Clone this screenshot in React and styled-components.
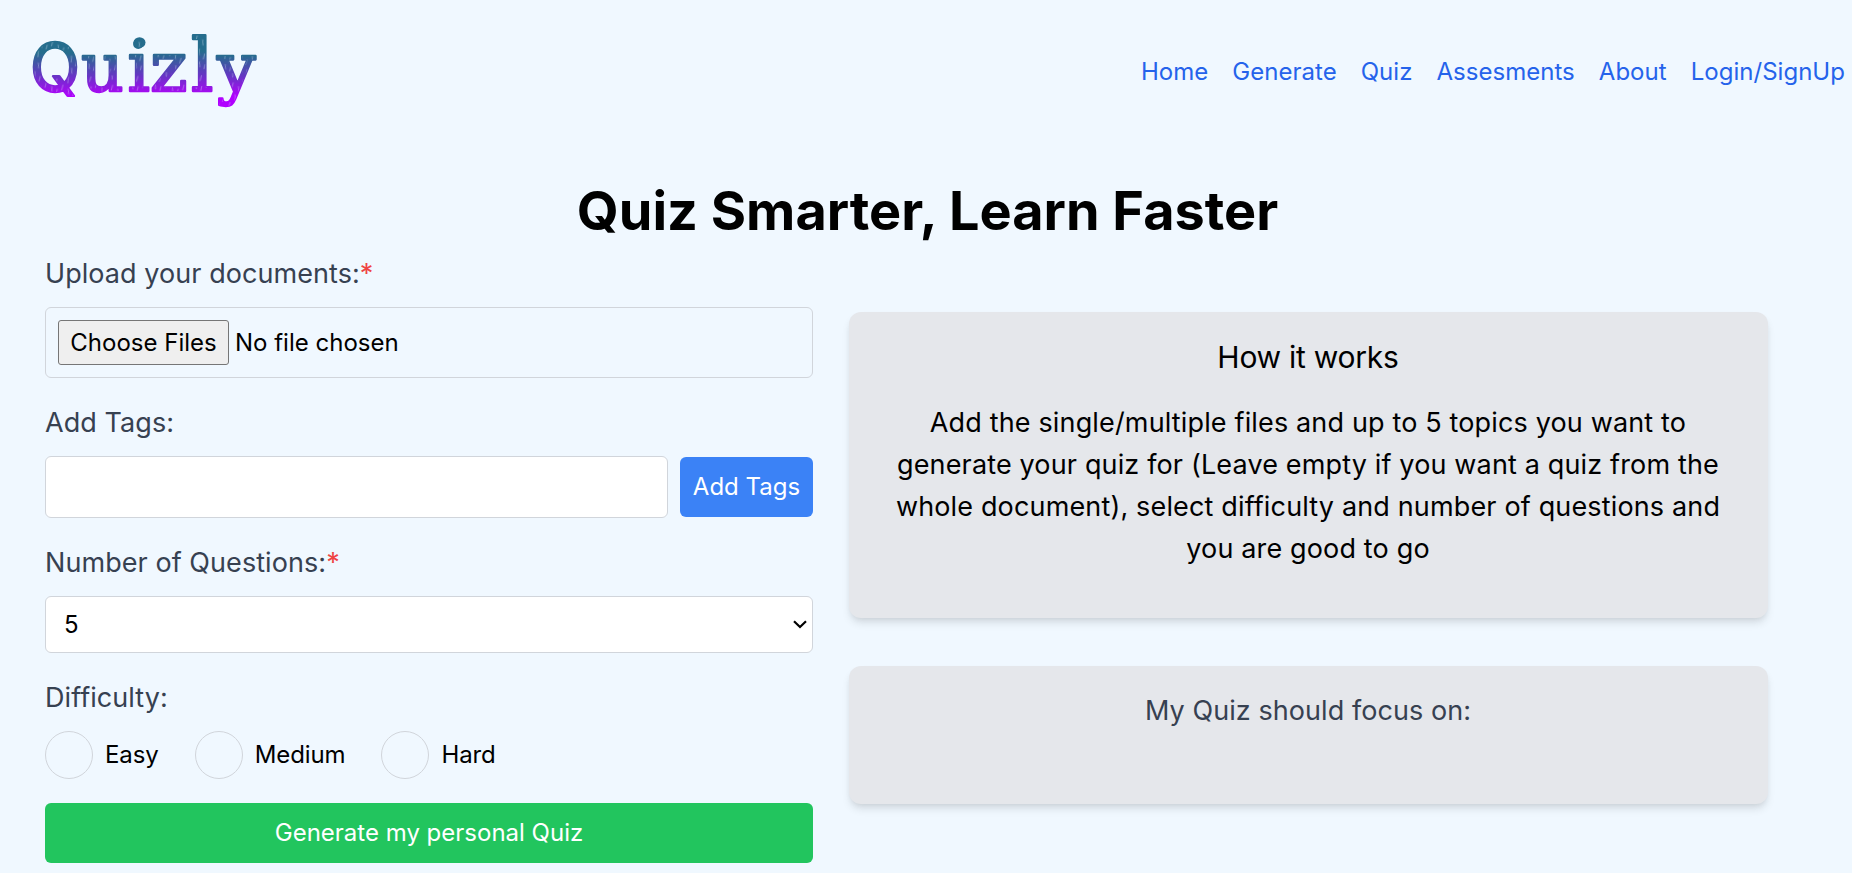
import React from "react";
import styled, { createGlobalStyle } from "styled-components";

const GlobalStyle = createGlobalStyle`
  *, *::before, *::after { box-sizing: border-box; }
  html, body { margin: 0; padding: 0; }
  body {
    height: 873px;
    overflow: hidden;
    background: #f0f8ff;
    color: #000;
    font-family: Inter, "Liberation Sans", sans-serif;
    font-size: 24px;
    line-height: 36px;
  }
  input, select, button { font: inherit; color: inherit; margin: 0; }
`;

const Header = styled.header`
  display: flex;
  align-items: center;
  justify-content: space-between;
  height: 144px;
  padding: 0 7px 0 24px;
`;

const LogoArt = styled.svg`
  display: block;
  width: 244px;
  height: 100px;
`;

const Nav = styled.nav`
  display: flex;
  gap: 24px;
  letter-spacing: 0.03px;
`;

const NavLink = styled.a`
  color: #2563eb;
  text-decoration: none;
  white-space: nowrap;
`;

const Title = styled.h1`
  margin: 37px 0 0;
  padding-left: 3px;
  height: 60px;
  font-size: 54px;
  line-height: 60px;
  font-weight: 700;
  text-align: center;
`;

const Main = styled.main`
  display: flex;
  gap: 36px;
  padding: 12px 84px 0 45px;
`;

const Form = styled.form`
  display: flex;
  flex-direction: column;
  gap: 24px;
  width: 768px;
`;

const Field = styled.div`
  display: flex;
  flex-direction: column;
  gap: 12px;
`;

const Label = styled.label`
  font-size: 27px;
  line-height: 42px;
  letter-spacing: 0.06px;
  color: #374151;
`;

const Required = styled.span`
  color: #ef4444;
`;

const FileInput = styled.input`
  height: 71px;
  padding: 12px;
  border: 1px solid #d1d5db;
  border-radius: 6px;

  &::file-selector-button {
    width: 171px;
    height: 45px;
    margin: 0 6px 0 0;
    padding: 0;
    border: 1px solid #767676;
    border-radius: 3px;
    background: #efefef;
    color: #000;
    font: inherit;
  }
`;

const TagRow = styled.div`
  display: flex;
  align-items: center;
  gap: 12px;
`;

const TextInput = styled.input`
  flex: 1;
  min-width: 0;
  height: 62px;
  padding: 12px;
  background: #fff;
  border: 1px solid #d1d5db;
  border-radius: 6px;
`;

const Button = styled.button`
  width: ${(p) => p.$width};
  height: 60px;
  padding: 0;
  border: 0;
  border-radius: 6px;
  background: ${(p) => p.$color};
  color: #fff;
  white-space: nowrap;
`;

const SelectBox = styled.div`
  display: grid;
  align-items: center;

  & > * { grid-area: 1 / 1; }
`;

const Select = styled.select`
  appearance: none;
  width: 100%;
  height: 57px;
  padding: 0 18px;
  background: #fff;
  border: 1px solid #d1d5db;
  border-radius: 6px;
`;

const Chevron = styled.svg`
  justify-self: end;
  width: 14px;
  height: 9px;
  margin-right: 6px;
  pointer-events: none;
`;

const Options = styled.div`
  display: flex;
  gap: 36px;
`;

const Option = styled.label`
  display: flex;
  align-items: center;
  gap: 12px;
  letter-spacing: -0.1px;
`;

const Radio = styled.input`
  appearance: none;
  width: 48px;
  height: 48px;
  border: 1px solid #d1d5db;
  border-radius: 50%;
`;

const Aside = styled.aside`
  display: flex;
  flex-direction: column;
  gap: 48px;
  width: 919px;
  padding-top: 59px;
`;

const Card = styled.section`
  height: ${(p) => p.$height};
  padding: 24px 37px 24px 36px;
  border-radius: 12px;
  background: #e5e7eb;
  box-shadow: 0 6px 9px -1.5px rgba(0, 0, 0, 0.1), 0 3px 6px -3px rgba(0, 0, 0, 0.1);
  text-align: center;
`;

const CardTitle = styled.h2`
  margin: 0 0 24px;
  font-size: 30px;
  line-height: 42px;
  font-weight: 400;
  letter-spacing: -0.25px;
`;

const CardText = styled.p`
  margin: 0;
  font-size: 27px;
  line-height: 42px;
  letter-spacing: ${(p) => (p.$muted ? "0.06px" : "0.15px")};
  color: ${(p) => (p.$muted ? "#374151" : "#000")};
`;

const SERIF = "DejaVu Serif";

const letters = [
  { char: "Q", x: 30, sx: 0.99, sy: 1, font: "Inter", size: 66 },
  { char: "u", x: 81, sx: 0.95, sy: 0.97, font: SERIF, size: 70 },
  { char: "i", x: 127.5, sx: 1, sy: 1, font: SERIF, size: 70 },
  { char: "z", x: 150, sx: 1.02, sy: 1, font: SERIF, size: 70 },
  { char: "l", x: 191, sx: 1, sy: 1.05, font: SERIF, size: 70 },
  { char: "y", x: 217, sx: 0.98, sy: 0.95, font: SERIF, size: 70 },
];

function Letters({ fill, stroke, strokeWidth }) {
  return (
    <g fill={fill} stroke={stroke} strokeWidth={strokeWidth} strokeLinejoin="round">
      {letters.map(({ char, x, sx, sy, font, size }) => (
        <text key={char} transform={`translate(${x} 91) scale(${sx} ${sy})`} fontFamily={font} fontSize={size}>
          {char}
        </text>
      ))}
    </g>
  );
}

function Logo() {
  return (
    <LogoArt viewBox="24 22 244 100" role="img" aria-label="Quizly">
      <defs>
        {/* Each letter is drawn from its own baseline, so y = 0 is the baseline here. */}
        <linearGradient id="ink" gradientUnits="userSpaceOnUse" x1="0" y1="-38" x2="0" y2="6">
          <stop offset="0" stopColor="#256d8d" />
          <stop offset="0.5" stopColor="#6436c3" />
          <stop offset="0.85" stopColor="#9d10ec" />
          <stop offset="1" stopColor="#b000ff" />
        </linearGradient>
        <pattern id="scratches" width="17" height="21" patternUnits="userSpaceOnUse" patternTransform="rotate(9)">
          <path
            d="M2 1l.6 6M8 5l-.6 5M13 0l.5 4M15 10l-.6 5M4 13l1 5M10 15l-.5 4"
            stroke="#e6efff"
            strokeOpacity=".5"
            strokeWidth=".7"
            strokeLinecap="round"
            fill="none"
          />
        </pattern>
      </defs>
      <Letters fill="url(#ink)" stroke="url(#ink)" strokeWidth="2.4" />
      <ellipse cx="139.5" cy="42.5" rx="6" ry="5.3" fill="#256d8d" />
      <Letters fill="url(#scratches)" />
    </LogoArt>
  );
}

const links = ["Home", "Generate", "Quiz", "Assesments", "About", "Login/SignUp"];
const levels = ["Easy", "Medium", "Hard"];

export default function App() {
  return (
    <>
      <GlobalStyle />
      <Header>
        <Logo />
        <Nav>
          {links.map((name) => (
            <NavLink key={name} href="#">{name}</NavLink>
          ))}
        </Nav>
      </Header>
      <Title>Quiz Smarter, Learn Faster</Title>
      <Main>
        <Form>
          <Field>
            <Label htmlFor="files">Upload your documents:<Required>*</Required></Label>
            <FileInput id="files" type="file" multiple />
          </Field>
          <Field>
            <Label htmlFor="tags">Add Tags:</Label>
            <TagRow>
              <TextInput id="tags" type="text" />
              <Button type="button" $color="#3b82f6" $width="133px">Add Tags</Button>
            </TagRow>
          </Field>
          <Field>
            <Label htmlFor="count">Number of Questions:<Required>*</Required></Label>
            <SelectBox>
              <Select id="count" defaultValue="5">
                <option>5</option>
                <option>10</option>
                <option>15</option>
              </Select>
              <Chevron viewBox="0 0 14 9">
                <path d="M1 1.2l6 5.8 6-5.8" fill="none" stroke="#000" strokeWidth="2.2" />
              </Chevron>
            </SelectBox>
          </Field>
          <Field>
            <Label as="div">Difficulty:</Label>
            <Options>
              {levels.map((level) => (
                <Option key={level}>
                  <Radio type="radio" name="difficulty" />
                  {level}
                </Option>
              ))}
            </Options>
          </Field>
          <Button type="button" $color="#22c55e" $width="100%">Generate my personal Quiz</Button>
        </Form>
        <Aside>
          <Card $height="306px">
            <CardTitle>How it works</CardTitle>
            <CardText>
              Add the single/multiple files and up to 5 topics you want to generate your quiz for
              (Leave empty if you want a quiz from the whole document), select difficulty and number
              of questions and you are good to go
            </CardText>
          </Card>
          <Card $height="138px">
            <CardText $muted>My Quiz should focus on:</CardText>
          </Card>
        </Aside>
      </Main>
    </>
  );
}
